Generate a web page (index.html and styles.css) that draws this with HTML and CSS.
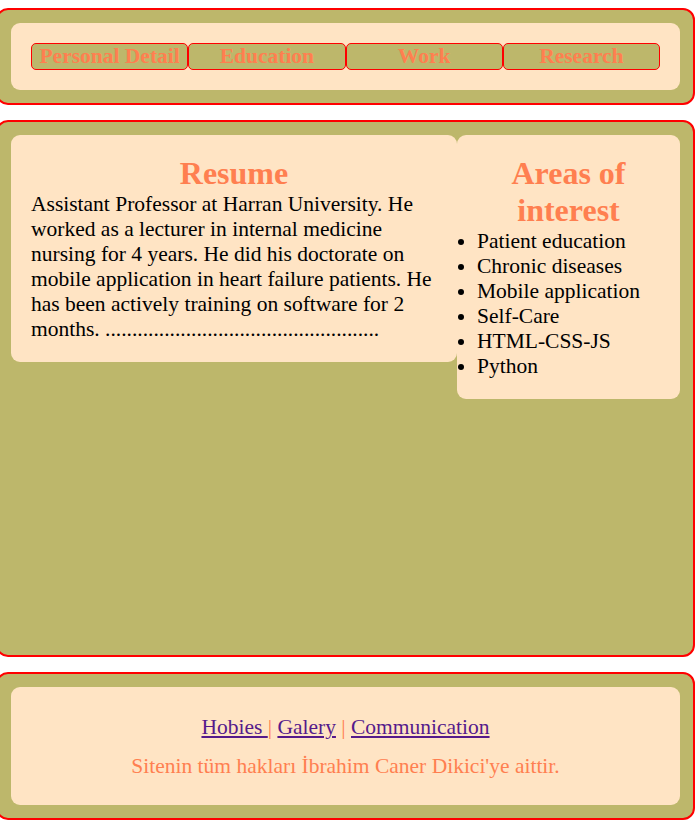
FILE: index.html
```html
<!DOCTYPE html>
<html lang="en">
<head>
<meta charset="utf-8">
<title>Resume</title>
<link rel="stylesheet" href="styles.css">
</head>
<body>
<header class="box header-box">
  <nav class="inner nav">
    <a class="nav-btn" href="#">Personal Detail</a>
    <a class="nav-btn" href="#">Education</a>
    <a class="nav-btn" href="#">Work</a>
    <a class="nav-btn" href="#">Research</a>
  </nav>
</header>
<main class="box main-box">
  <section class="card">
    <h1 class="card-title">Resume</h1>
    <p class="card-text">Assistant Professor at Harran University. He worked as a lecturer in internal medicine nursing for 4 years. He did his doctorate on mobile application in heart failure patients. He has been actively training on software for 2 months. ...................................................</p>
  </section>
  <section class="card">
    <h1 class="card-title">Areas of interest</h1>
    <ul class="interest-list">
      <li>Patient education</li>
      <li>Chronic diseases</li>
      <li>Mobile application</li>
      <li>Self-Care</li>
      <li>HTML-CSS-JS</li>
      <li>Python</li>
    </ul>
  </section>
</main>
<footer class="box footer-box">
  <div class="inner footer-inner">
    <p class="footer-links"><a class="flink" href="#">Hobies </a><span class="sep">|</span> <a class="flink" href="#">Galery</a> <span class="sep">|</span> <a class="flink" href="#">Communication</a></p>
    <p class="footer-copy">Sitenin tüm hakları İbrahim Caner Dikici'ye aittir.</p>
  </div>
</footer>
</body>
</html>
```
FILE: styles.css
```css
html, body {
  margin: 0;
  padding: 0;
  background: #ffffff;
}
body {
  font-family: "Liberation Serif", "Times New Roman", serif;
  font-size: 21.5px;
  color: #000;
}
.box {
  margin: 0 5px 0 -4px;
  padding: 13px;
  border: 2px solid #ff0000;
  border-radius: 12px;
  background: #bdb76b;
}
.header-box {
  margin-top: 8px;
}
.main-box {
  margin-top: 15px;
  height: 507px;
  display: grid;
  grid-template-columns: 2fr 1fr;
  align-items: start;
}
.footer-box {
  margin-top: 15px;
}
.inner {
  background: #ffe4c4;
  border-radius: 9px;
}
.nav {
  display: flex;
  padding: 20px;
}
.nav-btn {
  flex: 1;
  display: block;
  text-align: center;
  border: 1px solid #ff0000;
  border-radius: 5px;
  background: #bdb76b;
  color: #ff7f50;
  font-weight: bold;
  font-size: 21.5px;
  line-height: 25px;
  text-decoration: none;
  white-space: nowrap;
  overflow: hidden;
}
.card {
  background: #ffe4c4;
  border-radius: 9px;
  padding: 20px;
  min-width: 0;
}
.card-title {
  margin: 0;
  text-align: center;
  color: #ff7f50;
  font-size: 32px;
  line-height: 37px;
  font-weight: bold;
}
.card-text {
  margin: 0;
  line-height: 25px;
}
.interest-list {
  margin: 0;
  padding: 0;
  list-style: disc outside;
  line-height: 25px;
}
.footer-inner {
  padding: 28px 20px 26px;
  text-align: center;
}
.footer-links {
  margin: 0 0 14px;
  line-height: 25px;
}
.flink {
  color: #551a8b;
}
.sep {
  color: #ff7f50;
}
.footer-copy {
  margin: 0;
  line-height: 25px;
  color: #ff7f50;
}
```
